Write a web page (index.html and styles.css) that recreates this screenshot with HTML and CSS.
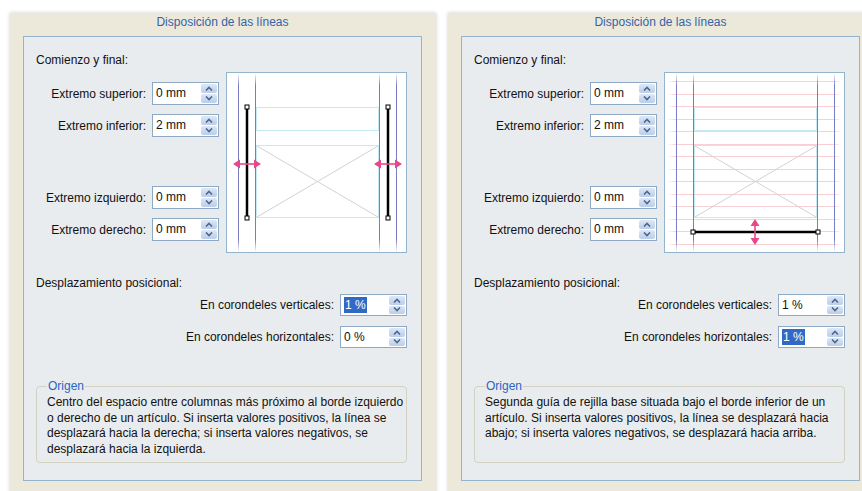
FILE: index.html
```html
<!DOCTYPE html>
<html lang="es">
<head>
  <meta charset="UTF-8" />
  <title>Disposición de las líneas</title>
  <link rel="stylesheet" href="styles.css">
</head>
<body>
  <div class="panel">
    <div class="panel-title">Disposición de las líneas</div>
    <div class="box">
      <div class="heading">Comienzo y final:</div>
      <div class="start">
        <div class="fields">
          <div class="field"><label>Extremo superior:</label><div class="spin"><span class="val">0 mm</span><span class="arrows"><span><svg width="8" height="5"><polyline points="1,4.5 4,1.5 7,4.5"/></svg></span><span><svg width="8" height="5"><polyline points="1,0.5 4,3.5 7,0.5"/></svg></span></span></div></div>
          <div class="field"><label>Extremo inferior:</label><div class="spin"><span class="val">2 mm</span><span class="arrows"><span><svg width="8" height="5"><polyline points="1,4.5 4,1.5 7,4.5"/></svg></span><span><svg width="8" height="5"><polyline points="1,0.5 4,3.5 7,0.5"/></svg></span></span></div></div>
          <div class="field split"><label>Extremo izquierdo:</label><div class="spin"><span class="val">0 mm</span><span class="arrows"><span><svg width="8" height="5"><polyline points="1,4.5 4,1.5 7,4.5"/></svg></span><span><svg width="8" height="5"><polyline points="1,0.5 4,3.5 7,0.5"/></svg></span></span></div></div>
          <div class="field"><label>Extremo derecho:</label><div class="spin"><span class="val">0 mm</span><span class="arrows"><span><svg width="8" height="5"><polyline points="1,4.5 4,1.5 7,4.5"/></svg></span><span><svg width="8" height="5"><polyline points="1,0.5 4,3.5 7,0.5"/></svg></span></span></div></div>
        </div>
        <div class="preview">
          <svg width="179" height="179" viewBox="0 0 179 179">
            <defs>
              <linearGradient id="fadeA" x1="0" y1="0" x2="0" y2="1">
                <stop offset="0" stop-color="#7b7bc3" stop-opacity="0"/>
                <stop offset="0.07" stop-color="#7b7bc3"/>
                <stop offset="0.93" stop-color="#7b7bc3"/>
                <stop offset="1" stop-color="#7b7bc3" stop-opacity="0"/>
              </linearGradient>
            </defs>
            <rect x="11" y="0" width="1" height="179" fill="url(#fadeA)"/>
            <rect x="28" y="0" width="1" height="179" fill="url(#fadeA)"/>
            <rect x="152" y="0" width="1" height="179" fill="url(#fadeA)"/>
            <rect x="169" y="0" width="1" height="179" fill="url(#fadeA)"/>
            <g class="frame">
              <rect x="29.5" y="34.5" width="122" height="23"/>
              <rect x="29.5" y="72.5" width="122" height="72"/>
            </g>
            <g class="cross">
              <line x1="30" y1="73" x2="151" y2="144"/>
              <line x1="151" y1="73" x2="30" y2="144"/>
            </g>
            <g class="rule">
              <line x1="20" y1="34" x2="20" y2="145"/>
              <line x1="161" y1="34" x2="161" y2="145"/>
            </g>
            <g class="handle">
              <rect x="18" y="32" width="4" height="4"/>
              <rect x="18" y="143" width="4" height="4"/>
              <rect x="159" y="32" width="4" height="4"/>
              <rect x="159" y="143" width="4" height="4"/>
            </g>
            <g class="move">
              <line x1="10" y1="91" x2="30" y2="91"/>
              <polygon points="6,91 13,86.5 13,95.5"/>
              <polygon points="34,91 27,86.5 27,95.5"/>
              <line x1="151" y1="91" x2="171" y2="91"/>
              <polygon points="147,91 154,86.5 154,95.5"/>
              <polygon points="175,91 168,86.5 168,95.5"/>
            </g>
          </svg>
        </div>
      </div>
      <div class="heading second">Desplazamiento posicional:</div>
      <div class="offsets">
        <div class="field"><label>En corondeles verticales:</label><div class="spin"><span class="val"><span class="sel">1 %</span></span><span class="arrows"><span><svg width="8" height="5"><polyline points="1,4.5 4,1.5 7,4.5"/></svg></span><span><svg width="8" height="5"><polyline points="1,0.5 4,3.5 7,0.5"/></svg></span></span></div></div>
        <div class="field"><label>En corondeles horizontales:</label><div class="spin"><span class="val">0 %</span><span class="arrows"><span><svg width="8" height="5"><polyline points="1,4.5 4,1.5 7,4.5"/></svg></span><span><svg width="8" height="5"><polyline points="1,0.5 4,3.5 7,0.5"/></svg></span></span></div></div>
      </div>
      <fieldset class="origin">
        <legend>Origen</legend>
        <p>Centro del espacio entre columnas más próximo al borde izquierdo o derecho de un artículo. Si inserta valores positivos, la línea se desplazará hacia la derecha; si inserta valores negativos, se desplazará hacia la izquierda.</p>
      </fieldset>
    </div>
  </div>

  <div class="panel">
    <div class="panel-title">Disposición de las líneas</div>
    <div class="box">
      <div class="heading">Comienzo y final:</div>
      <div class="start">
        <div class="fields">
          <div class="field"><label>Extremo superior:</label><div class="spin"><span class="val">0 mm</span><span class="arrows"><span><svg width="8" height="5"><polyline points="1,4.5 4,1.5 7,4.5"/></svg></span><span><svg width="8" height="5"><polyline points="1,0.5 4,3.5 7,0.5"/></svg></span></span></div></div>
          <div class="field"><label>Extremo inferior:</label><div class="spin"><span class="val">2 mm</span><span class="arrows"><span><svg width="8" height="5"><polyline points="1,4.5 4,1.5 7,4.5"/></svg></span><span><svg width="8" height="5"><polyline points="1,0.5 4,3.5 7,0.5"/></svg></span></span></div></div>
          <div class="field split"><label>Extremo izquierdo:</label><div class="spin"><span class="val">0 mm</span><span class="arrows"><span><svg width="8" height="5"><polyline points="1,4.5 4,1.5 7,4.5"/></svg></span><span><svg width="8" height="5"><polyline points="1,0.5 4,3.5 7,0.5"/></svg></span></span></div></div>
          <div class="field"><label>Extremo derecho:</label><div class="spin"><span class="val">0 mm</span><span class="arrows"><span><svg width="8" height="5"><polyline points="1,4.5 4,1.5 7,4.5"/></svg></span><span><svg width="8" height="5"><polyline points="1,0.5 4,3.5 7,0.5"/></svg></span></span></div></div>
        </div>
        <div class="preview">
          <svg width="179" height="179" viewBox="0 0 179 179">
            <defs>
              <linearGradient id="fadeB" x1="0" y1="0" x2="0" y2="1">
                <stop offset="0" stop-color="#7b7bc3" stop-opacity="0"/>
                <stop offset="0.07" stop-color="#7b7bc3"/>
                <stop offset="0.93" stop-color="#7b7bc3"/>
                <stop offset="1" stop-color="#7b7bc3" stop-opacity="0"/>
              </linearGradient>
              <linearGradient id="fadeP" x1="0" y1="0" x2="1" y2="0">
                <stop offset="0" stop-color="#f8d0d3" stop-opacity="0"/>
                <stop offset="0.05" stop-color="#f8d0d3"/>
                <stop offset="0.95" stop-color="#f8d0d3"/>
                <stop offset="1" stop-color="#f8d0d3" stop-opacity="0"/>
              </linearGradient>
            </defs>
            <g fill="url(#fadeP)">
              <rect x="2" y="8" width="175" height="1"/>
              <rect x="2" y="21" width="175" height="1"/>
              <rect x="2" y="33" width="175" height="1"/>
              <rect x="2" y="46" width="175" height="1"/>
              <rect x="2" y="58" width="175" height="1"/>
              <rect x="2" y="71" width="175" height="1"/>
              <rect x="2" y="83" width="175" height="1"/>
              <rect x="2" y="96" width="175" height="1"/>
              <rect x="2" y="108" width="175" height="1"/>
              <rect x="2" y="121" width="175" height="1"/>
              <rect x="2" y="133" width="175" height="1"/>
              <rect x="2" y="146" width="175" height="1"/>
              <rect x="2" y="158" width="175" height="1"/>
              <rect x="2" y="171" width="175" height="1"/>
            </g>
            <rect x="11" y="0" width="1" height="179" fill="url(#fadeB)"/>
            <rect x="28" y="0" width="1" height="179" fill="url(#fadeB)"/>
            <rect x="152" y="0" width="1" height="179" fill="url(#fadeB)"/>
            <rect x="169" y="0" width="1" height="179" fill="url(#fadeB)"/>
            <g class="frame">
              <rect x="29.5" y="34.5" width="122" height="23"/>
              <rect x="29.5" y="72.5" width="122" height="72"/>
            </g>
            <g class="cross">
              <line x1="30" y1="73" x2="151" y2="144"/>
              <line x1="151" y1="73" x2="30" y2="144"/>
            </g>
            <g class="rule">
              <line x1="28" y1="159" x2="153" y2="159"/>
            </g>
            <g class="handle">
              <rect x="26" y="157" width="4" height="4"/>
              <rect x="151" y="157" width="4" height="4"/>
            </g>
            <g class="move">
              <line x1="90" y1="150" x2="90" y2="168"/>
              <polygon points="90,146 85.5,153 94.5,153"/>
              <polygon points="90,172 85.5,165 94.5,165"/>
            </g>
          </svg>
        </div>
      </div>
      <div class="heading second">Desplazamiento posicional:</div>
      <div class="offsets">
        <div class="field"><label>En corondeles verticales:</label><div class="spin"><span class="val">1 %</span><span class="arrows"><span><svg width="8" height="5"><polyline points="1,4.5 4,1.5 7,4.5"/></svg></span><span><svg width="8" height="5"><polyline points="1,0.5 4,3.5 7,0.5"/></svg></span></span></div></div>
        <div class="field"><label>En corondeles horizontales:</label><div class="spin"><span class="val"><span class="sel">1 %</span></span><span class="arrows"><span><svg width="8" height="5"><polyline points="1,4.5 4,1.5 7,4.5"/></svg></span><span><svg width="8" height="5"><polyline points="1,0.5 4,3.5 7,0.5"/></svg></span></span></div></div>
      </div>
      <fieldset class="origin">
        <legend>Origen</legend>
        <p>Segunda guía de rejilla base situada bajo el borde inferior de un artículo. Si inserta valores positivos, la línea se desplazará hacia abajo; si inserta valores negativos, se desplazará hacia arriba.</p>
      </fieldset>
    </div>
  </div>
</body>
</html>
```

FILE: styles.css
```css
body {
  margin: 0;
  height: 491px;
  box-sizing: border-box;
  overflow: hidden;
  display: flex;
  gap: 12px;
  padding: 13px 0 0 10px;
  background: #fff;
  font-family: "Liberation Sans", Arial, sans-serif;
  font-size: 12px;
  color: #111;
}
.panel {
  flex: 0 0 426px;
  height: 490px;
  box-sizing: border-box;
  padding: 0 14px 0 13px;
  background: #ece9da;
  box-shadow: 0 0 4px rgba(0, 0, 0, 0.2);
}
.panel-title {
  height: 23px;
  line-height: 18px;
  text-align: center;
  color: #3563a8;
}
.box {
  background: #e9ecee;
  border: 1px solid #93b4cc;
  padding: 16px 14px 17px 12px;
}
.heading {
  line-height: 15px;
}
.heading.second {
  margin-top: 23px;
}
.start {
  display: grid;
  grid-template-columns: 183px 181px;
  column-gap: 7px;
}
.fields {
  display: flex;
  flex-direction: column;
  gap: 9px;
  padding-top: 14px;
}
.field {
  display: flex;
  align-items: center;
  justify-content: flex-end;
  gap: 6px;
}
.split {
  margin-top: 40px;
}
.spin {
  width: 67px;
  height: 23px;
  box-sizing: border-box;
  border: 1px solid #8ea9c4;
  background: #fff;
  display: flex;
}
.val {
  flex: 1;
  padding-left: 3px;
  line-height: 21px;
}
.sel {
  background: #316ac5;
  color: #fff;
  padding: 1px 1px;
}
.arrows {
  width: 16px;
  display: flex;
  flex-direction: column;
  gap: 1px;
  padding: 1px;
}
.arrows span {
  flex: 1;
  display: flex;
  align-items: center;
  justify-content: center;
  border-radius: 2px;
  background: linear-gradient(#dde7f5, #bccde8);
}
.arrows svg polyline {
  fill: none;
  stroke: #4b6795;
  stroke-width: 1.6;
}
.offsets {
  display: flex;
  flex-direction: column;
  align-items: flex-end;
  gap: 10px;
  margin-top: 3px;
}
.offsets .spin {
  height: 22px;
}
.offsets .val {
  line-height: 20px;
}
.preview {
  margin-top: 4px;
  width: 181px;
  height: 181px;
  box-sizing: border-box;
  border: 1px solid #93b4cc;
  background: #fff;
}
.preview svg {
  display: block;
}
.frame rect {
  fill: none;
  stroke: #86d4ea;
  stroke-dasharray: 1 1;
}
.cross line {
  stroke: #d2d2d2;
  stroke-width: 1;
}
.rule line {
  stroke: #000;
  stroke-width: 2.5;
}
.handle rect {
  fill: #fff;
  stroke: #000;
  stroke-width: 1;
}
.move line {
  stroke: #e8488a;
  stroke-width: 1.6;
}
.move polygon {
  fill: #e8488a;
}
.origin {
  margin: 31px 0 0;
  height: 84px;
  box-sizing: border-box;
  min-width: 0;
  border: 1px solid #d3d1c2;
  border-radius: 4px;
  padding: 0 0 0 10px;
}
.origin legend {
  padding: 0 1px;
  line-height: 14px;
  color: #2e63bf;
}
.origin p {
  margin: 2px 0 0;
  line-height: 15.5px;
}
```
